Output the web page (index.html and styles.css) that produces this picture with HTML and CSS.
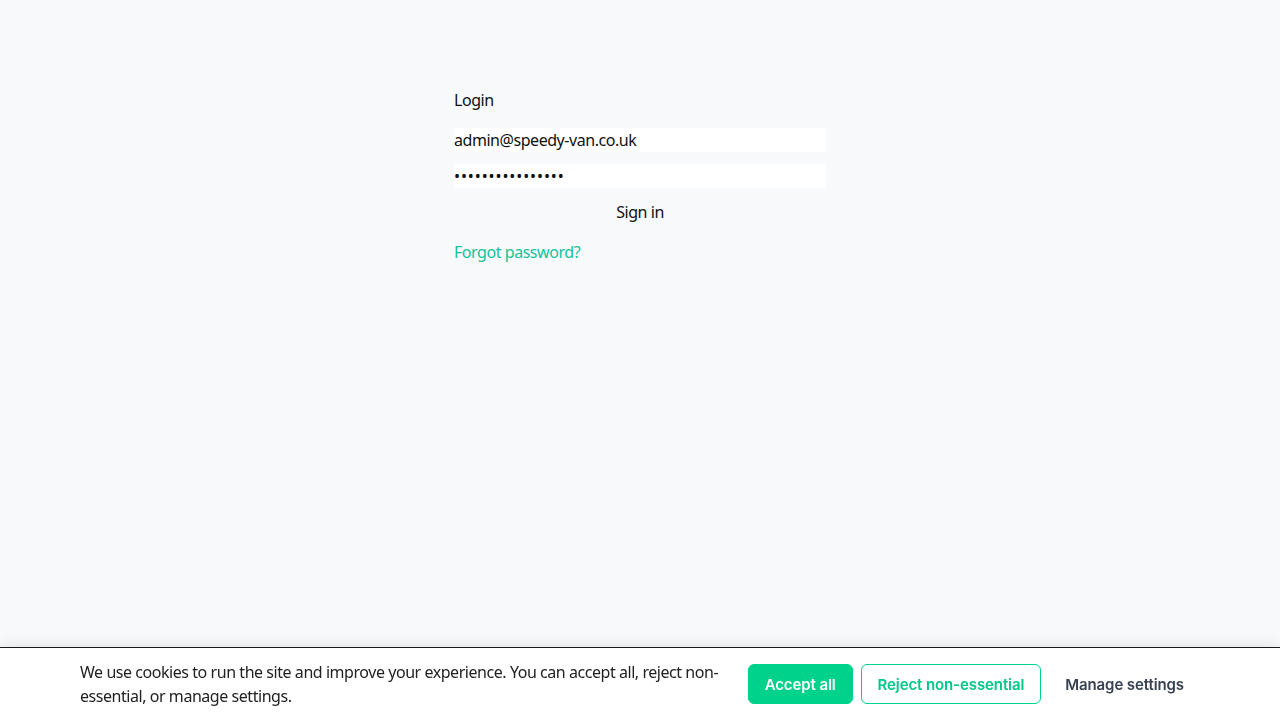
FILE: index.html
```html
<!DOCTYPE html>
<html lang="en">
<head>
<meta charset="utf-8">
<title>Login</title>
<link rel="stylesheet" href="styles.css">
</head>
<body>
<main class="page">
  <form class="login">
    <h1 class="title">Login</h1>
    <input class="field" type="email" value="admin@speedy-van.co.uk">
    <input class="field field-pass" type="password" value="................">
    <button class="signin" type="button">Sign in</button>
    <a class="forgot" href="#">Forgot password?</a>
  </form>
</main>
<div class="cookie">
  <p class="cookie-text">We use cookies to run the site and improve your experience. You can accept all, reject non-essential, or manage settings.</p>
  <div class="cookie-actions">
    <button class="btn btn-accept" type="button">Accept all</button>
    <button class="btn btn-reject" type="button">Reject non-essential</button>
    <button class="btn btn-manage" type="button">Manage settings</button>
  </div>
</div>
</body>
</html>
```
FILE: styles.css
```css
* { box-sizing: border-box; }
html, body { height: 100%; }
body {
  margin: 0;
  background: #f8f9fa;
  font-family: "Noto Sans", "Open Sans", sans-serif;
  letter-spacing: -0.45px;
  color: #111;
  overflow: hidden;
}
.page {
  display: flex;
  justify-content: center;
  padding-top: 88px;
}
.login {
  width: 372px;
  display: flex;
  flex-direction: column;
}
.title {
  margin: 0 0 16px;
  font-size: 16px;
  font-weight: 400;
  line-height: 24px;
}
.field {
  height: 24px;
  border: 0;
  padding: 0;
  margin: 0 0 12px;
  background: #fff;
  font: inherit;
  font-size: 16px;
  letter-spacing: -0.45px;
  color: #111;
  outline: none;
}
.field-pass {
  letter-spacing: 0.9px;
}
.signin {
  margin: 0;
  padding: 0;
  border: 0;
  background: transparent;
  font: inherit;
  font-size: 16px;
  line-height: 24px;
  letter-spacing: -0.45px;
  color: #111;
  text-align: center;
}
.forgot {
  margin-top: 16px;
  font-size: 16px;
  line-height: 24px;
  color: #12c39a;
  text-decoration: none;
}
.cookie {
  position: fixed;
  left: 0; right: 0; bottom: 0;
  height: 73px;
  background: #fff;
  border-top: 1px solid #1a1a1a;
  box-shadow: 0 -4px 12px rgba(0,0,0,0.07);
  display: flex;
  align-items: center;
  justify-content: space-between;
  padding: 0 80px;
  gap: 24px;
}
.cookie-text {
  margin: 0;
  flex: 1 1 auto;
  font-size: 16px;
  line-height: 24px;
  color: #222;
}
.cookie-actions {
  display: flex;
  align-items: center;
  gap: 8px;
  flex-shrink: 0;
}
.btn {
  height: 40px;
  border-radius: 6px;
  font-family: Inter, "Noto Sans", sans-serif;
  font-size: 15px;
  font-weight: 600;
  letter-spacing: -0.1px;
  padding: 0 16px;
  white-space: nowrap;
  cursor: pointer;
}
.btn-accept {
  background: #00d18b;
  border: 1px solid #00d18b;
  color: #fff;
}
.btn-reject {
  background: #fff;
  border: 1px solid #00d18b;
  color: #00c888;
}
.btn-manage {
  background: transparent;
  border: 0;
  color: #374151;
}
```
